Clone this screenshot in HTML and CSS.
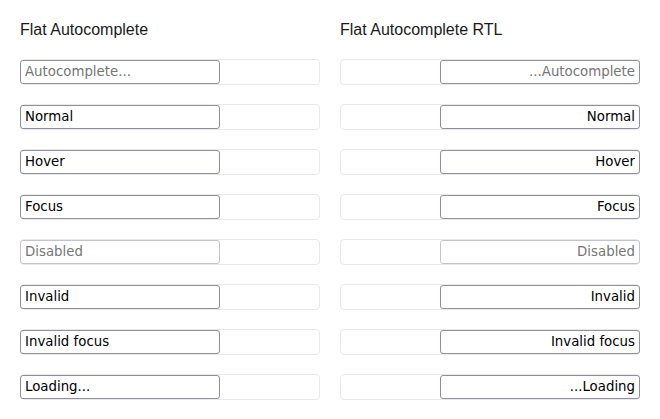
FILE: index.html
```html
<!DOCTYPE html>
<html>
<head>
<meta charset="utf-8">
<link rel="stylesheet" href="styles.css">
</head>
<body>
<div class="page">
  <section class="col">
    <h2 class="title">Flat Autocomplete</h2>
    <div class="list">
      <div class="field"><input class="inp" placeholder="Autocomplete..."></div>
      <div class="field"><input class="inp" value="Normal"></div>
      <div class="field"><input class="inp" value="Hover"></div>
      <div class="field"><input class="inp" value="Focus"></div>
      <div class="field"><input class="inp" value="Disabled" disabled></div>
      <div class="field"><input class="inp" value="Invalid"></div>
      <div class="field"><input class="inp" value="Invalid focus"></div>
      <div class="field"><input class="inp" value="Loading..."></div>
    </div>
  </section>
  <section class="col">
    <h2 class="title">Flat Autocomplete RTL</h2>
    <div class="list">
      <div class="field rtl" dir="rtl"><input class="inp" placeholder="Autocomplete..."></div>
      <div class="field rtl" dir="rtl"><input class="inp" value="Normal"></div>
      <div class="field rtl" dir="rtl"><input class="inp" value="Hover"></div>
      <div class="field rtl" dir="rtl"><input class="inp" value="Focus"></div>
      <div class="field rtl" dir="rtl"><input class="inp" value="Disabled" disabled></div>
      <div class="field rtl" dir="rtl"><input class="inp" value="Invalid"></div>
      <div class="field rtl" dir="rtl"><input class="inp" value="Invalid focus"></div>
      <div class="field rtl" dir="rtl"><input class="inp" value="Loading..."></div>
    </div>
  </section>
</div>
</body>
</html>
```

FILE: styles.css
```css
html, body {
  margin: 0;
  padding: 0;
  background: #ffffff;
}
.page {
  display: flex;
  gap: 20px;
  padding: 20px 20px 0 20px;
}
.col {
  width: 300px;
}
.title {
  margin: 0;
  font-family: "Liberation Sans", Arial, sans-serif;
  font-weight: normal;
  font-size: 16px;
  line-height: 20px;
  color: #1a1a1a;
}
.list {
  display: flex;
  flex-direction: column;
  gap: 19px;
  margin-top: 19px;
}
.field {
  box-sizing: border-box;
  width: 300px;
  height: 26px;
  border: 1px solid #e9e9ec;
  border-radius: 4px;
  display: flex;
  align-items: center;
}
.inp {
  box-sizing: border-box;
  width: 200px;
  height: 24px;
  margin: 0 0 0 -1px;
  padding: 0 4px 1px 4px;
  border: 1px solid #8f8f9d;
  border-radius: 3px;
  font-family: "DejaVu Sans", sans-serif;
  font-size: 13.333px;
  color: #000;
  background: #fff;
  outline: none;
}
.inp::placeholder {
  color: #757575;
  opacity: 1;
}
.inp:disabled {
  border-color: #c4c4c8;
  color: #767676;
  background: #fff;
}
.rtl .inp {
  direction: rtl;
  text-align: right;
  margin: 0 -1px 0 0;
}
```
